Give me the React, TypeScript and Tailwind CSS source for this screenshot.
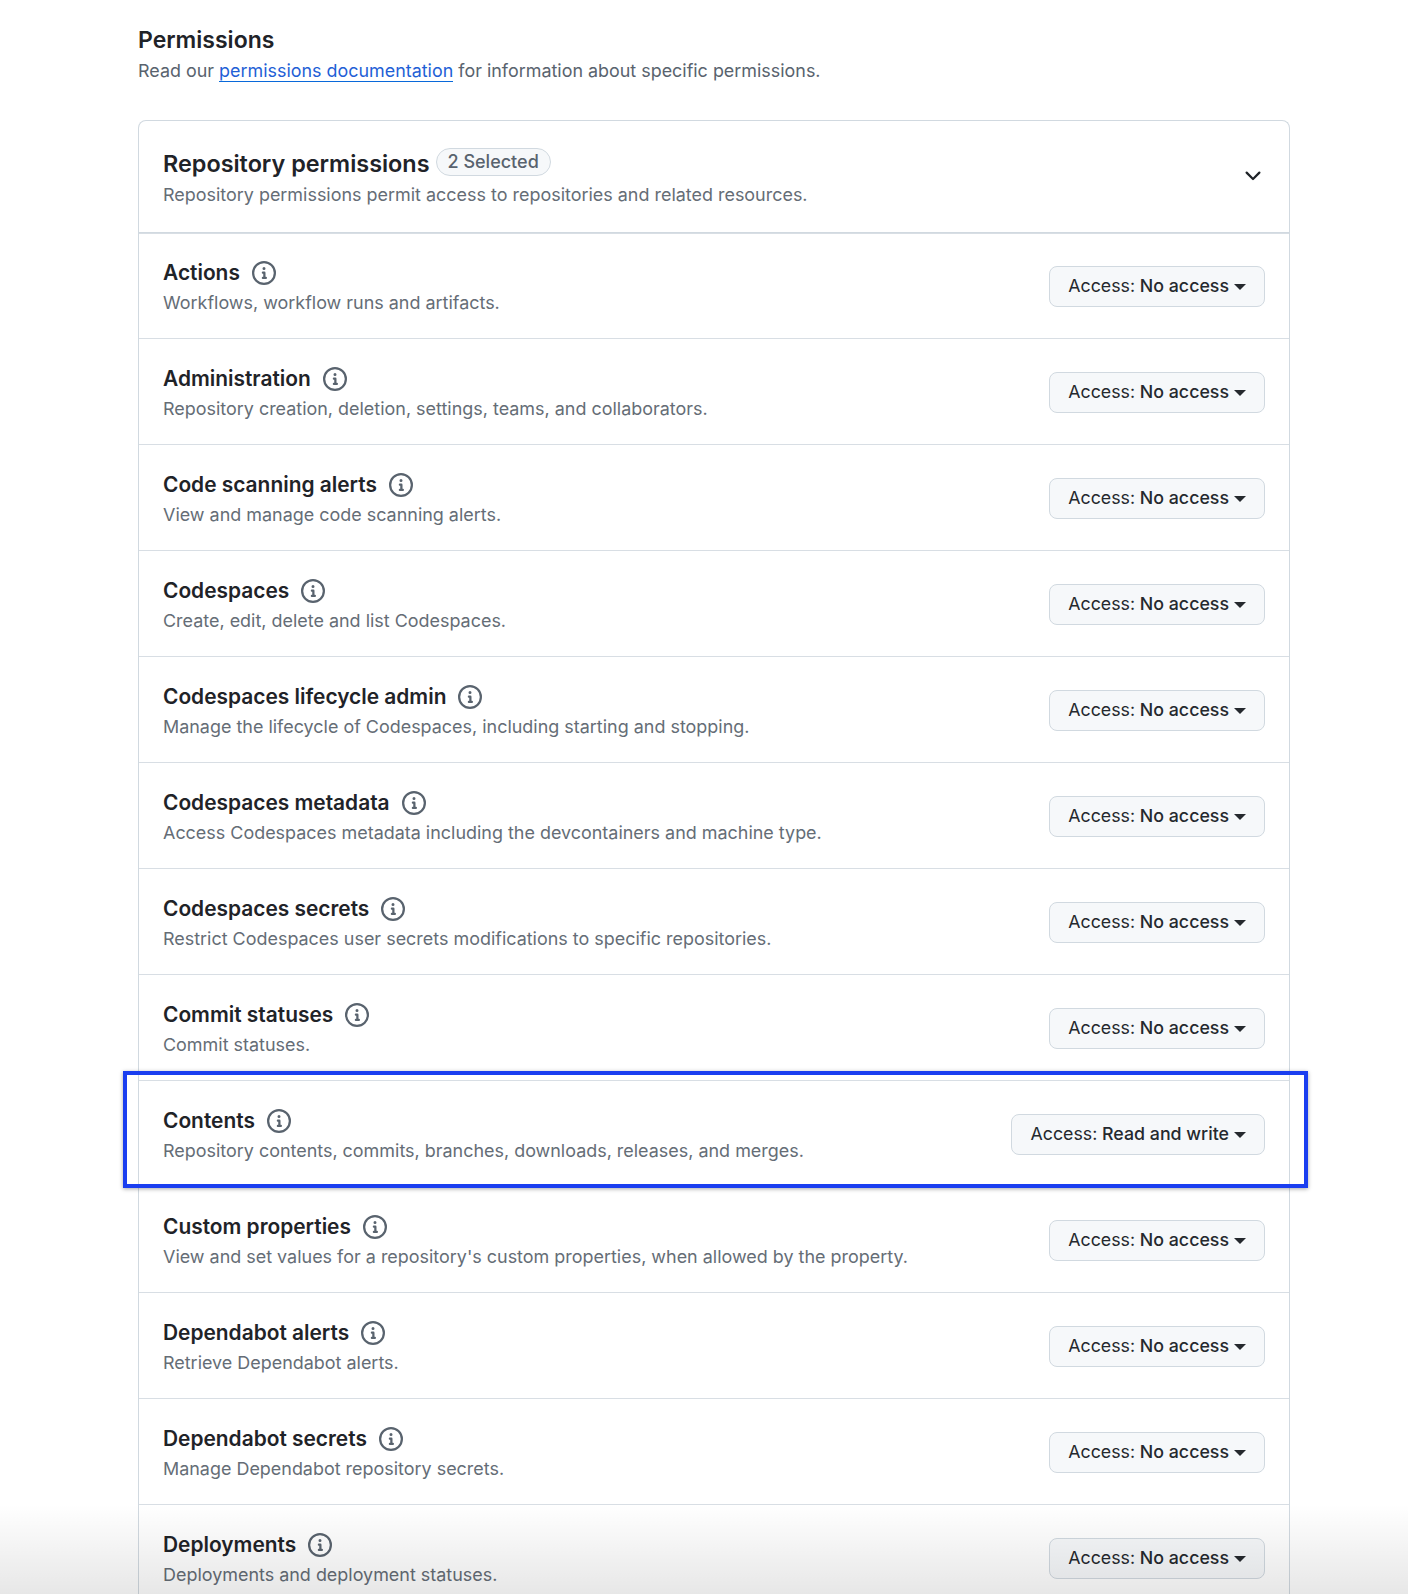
const permissions = [
  { name: 'Actions', description: 'Workflows, workflow runs and artifacts.' },
  { name: 'Administration', description: 'Repository creation, deletion, settings, teams, and collaborators.' },
  { name: 'Code scanning alerts', description: 'View and manage code scanning alerts.' },
  { name: 'Codespaces', description: 'Create, edit, delete and list Codespaces.' },
  { name: 'Codespaces lifecycle admin', description: 'Manage the lifecycle of Codespaces, including starting and stopping.' },
  { name: 'Codespaces metadata', description: 'Access Codespaces metadata including the devcontainers and machine type.' },
  { name: 'Codespaces secrets', description: 'Restrict Codespaces user secrets modifications to specific repositories.' },
  { name: 'Commit statuses', description: 'Commit statuses.' },
  { name: 'Contents', description: 'Repository contents, commits, branches, downloads, releases, and merges.', access: 'Read and write' },
  { name: 'Custom properties', description: "View and set values for a repository's custom properties, when allowed by the property." },
  { name: 'Dependabot alerts', description: 'Retrieve Dependabot alerts.' },
  { name: 'Dependabot secrets', description: 'Manage Dependabot repository secrets.' },
  { name: 'Deployments', description: 'Deployments and deployment statuses.' },
];

function InfoIcon() {
  return (
    <svg viewBox="0 0 16 16" className="h-6 w-6 shrink-0" fill="#59636e">
      <path d="M0 8a8 8 0 1 1 16 0A8 8 0 0 1 0 8Zm8-6.5a6.5 6.5 0 1 0 0 13 6.5 6.5 0 0 0 0-13ZM6.5 7.75A.75.75 0 0 1 7.25 7h1a.75.75 0 0 1 .75.75v2.75h.25a.75.75 0 0 1 0 1.5h-2a.75.75 0 0 1 0-1.5h.25v-2h-.25a.75.75 0 0 1-.75-.75ZM8 6a1 1 0 1 1 0-2 1 1 0 0 1 0 2Z" />
    </svg>
  );
}

function PermissionRow({ name, description, access = 'No access' }: { name: string; description: string; access?: string }) {
  return (
    <div className="flex h-[106px] items-center justify-between border-t border-[#d8dee4] pl-6 pr-6 first:h-[105px] first:pb-px">
      <div className="mt-[3px]">
        <div className="flex items-center gap-3 text-[20.9px] leading-[30px] font-semibold text-[#1f2328]">
          {name}
          <InfoIcon />
        </div>
        <div className="mt-[1px] text-[17.95px] leading-[28px] text-[#656d76]">{description}</div>
      </div>
      <button type="button" className="mt-[2px] flex h-[41px] items-center gap-[5px] rounded-lg border border-[#d1d9e0] bg-[#f6f8fa] pl-[18px] pr-[18px] text-[17.8px] font-medium text-[#25292e]">
        <span><span className="font-normal">Access:</span> {access}</span>
        <span className="h-0 w-0 border-x-[6px] border-t-[6px] border-x-transparent border-t-[#25292e]" />
      </button>
    </div>
  );
}

export default function App() {
  return (
    <div className="relative h-[1594px] overflow-hidden bg-white font-['Inter',sans-serif]">
      <div className="pl-[138px] pr-[118px] pt-[24px]">
        <h2 className="text-[23px] leading-[32px] font-semibold text-[#1f2328]">Permissions</h2>
        <p className="mt-[1px] text-[17.92px] leading-[28px] text-[#59636e]">
          Read our <a className="border-b border-[#0969da] text-[#1f5fd6]">permissions documentation</a> for information about specific permissions.
        </p>

        <div className="mt-[35px] rounded-t-lg border-x border-t border-[#d1d9e0]">
          <div className="flex h-[112px] items-center justify-between border-b border-[#d1d9e0] pl-6 pr-6">
            <div>
              <div className="flex items-center gap-[6px]">
                <span className="text-[23.4px] leading-[36px] font-semibold text-[#1f2328]">Repository permissions</span>
                <span className="-mt-[3px] rounded-full border border-[#d1d9e0] bg-[#f6f8fa] px-[11px] text-[18px] leading-[26px] font-medium text-[#59636e]">2 Selected</span>
              </div>
              <div className="text-[17.95px] leading-[26px] text-[#656d76]">Repository permissions permit access to repositories and related resources.</div>
            </div>
            <svg viewBox="0 0 16 16" className="-mt-[2px] h-6 w-6" fill="#1f2328">
              <path d="M12.78 5.22a.749.749 0 0 1 0 1.06l-4.25 4.25a.749.749 0 0 1-1.06 0L3.22 6.28a.749.749 0 1 1 1.06-1.06L8 8.939l3.72-3.719a.749.749 0 0 1 1.06 0Z" />
            </svg>
          </div>
          <div>
            {permissions.map((p) => (
              <PermissionRow key={p.name} {...p} />
            ))}
          </div>
        </div>
      </div>

      {/* highlight drawn over the Contents row */}
      <div className="pointer-events-none absolute left-[123px] top-[1071px] h-[117px] w-[1185px] border-[4px] border-[#1a3ef0] shadow-[0_1px_4px_rgba(0,0,0,0.35)]" />
      {/* fade at the bottom of the capture */}
      <div className="pointer-events-none absolute inset-x-0 bottom-0 h-[90px] bg-gradient-to-b from-transparent to-[#00000018]" />
    </div>
  );
}
